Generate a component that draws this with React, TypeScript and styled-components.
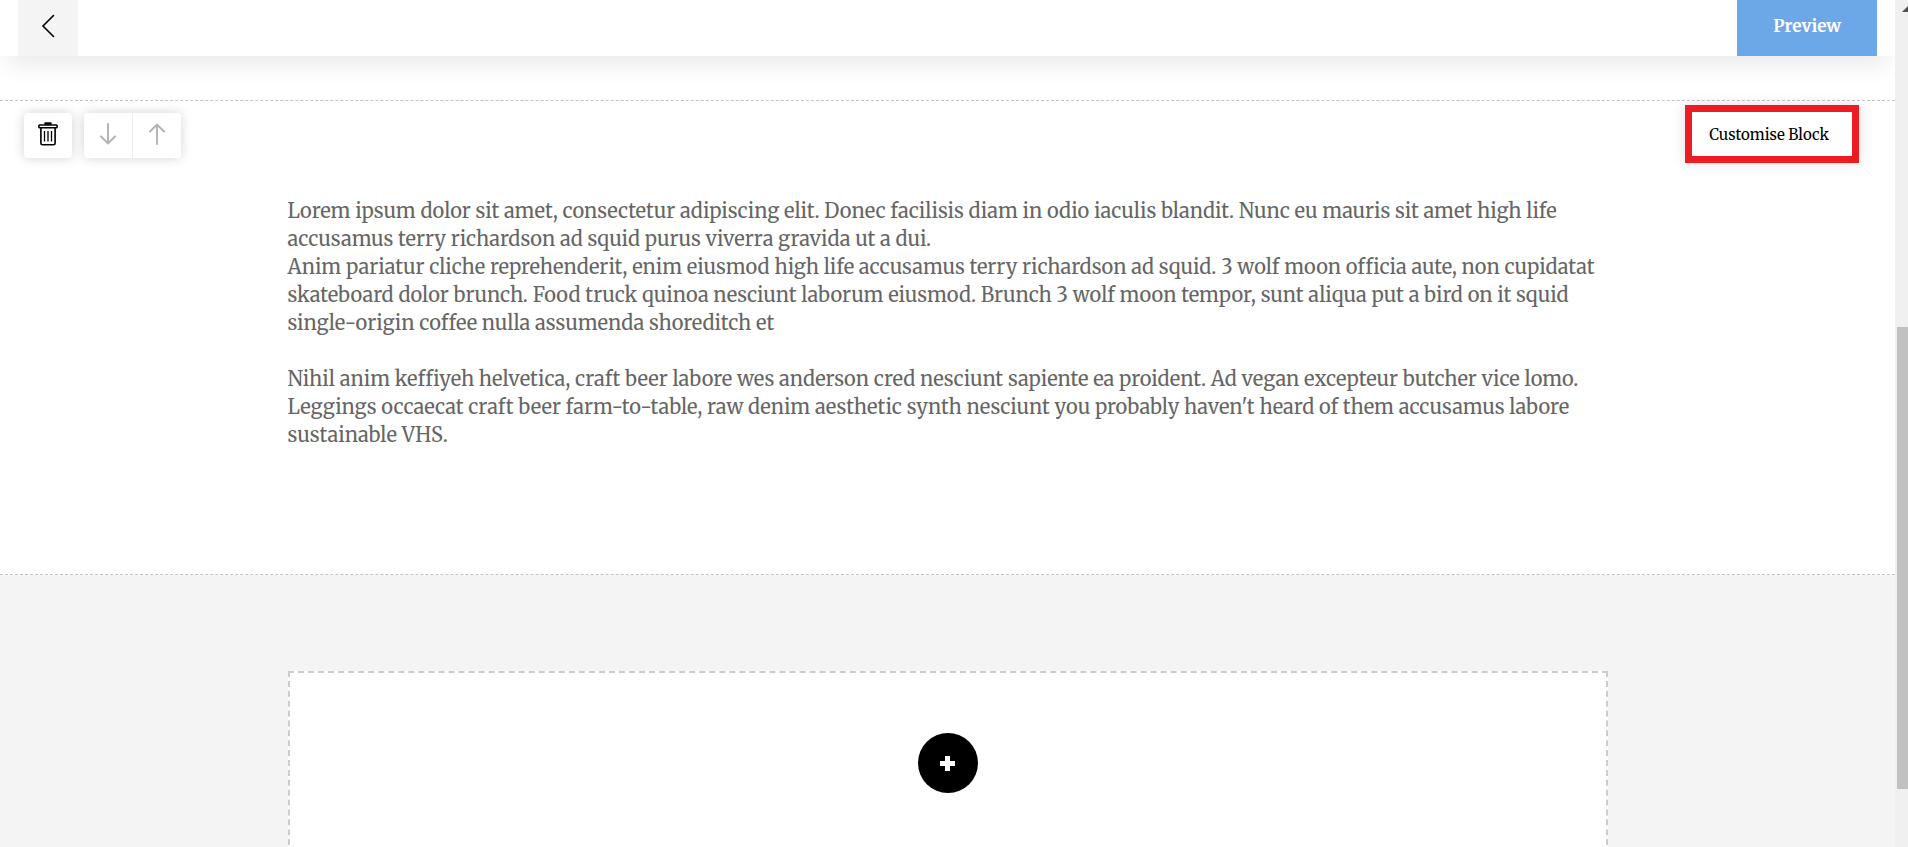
import React from "react";
import styled, { createGlobalStyle } from "styled-components";

const GlobalStyle = createGlobalStyle`
  *, *::before, *::after { box-sizing: border-box; }
  body {
    margin: 0;
    background: #fff;
    font-family: Merriweather, "DejaVu Serif", serif;
  }
  button { font-family: inherit; cursor: pointer; }
`;

const Screen = styled.div`
  display: flex;
  height: 100vh;
  overflow: hidden;
`;

const Page = styled.div`
  flex: 1;
  min-width: 0;
  display: flex;
  flex-direction: column;
  overflow: hidden;
`;

const Header = styled.header`
  flex: none;
  display: flex;
  justify-content: space-between;
  height: 56px;
  padding: 0 18px;
  background: #fff;
  box-shadow: 0 16px 24px -8px rgba(0, 0, 0, 0.09);
`;

const BackButton = styled.button`
  display: flex;
  align-items: center;
  justify-content: center;
  width: 60px;
  padding: 0 0 4px;
  border: 0;
  background: #f4f4f4;
`;

const PreviewButton = styled.button`
  padding: 0 36px 4px;
  border: 0;
  background: #6ca8e8;
  color: #fff;
  font-size: 17px;
  font-weight: 700;
`;

const Block = styled.section`
  flex: none;
  margin-top: 44px;
  padding-bottom: 125px;
  border-top: 1px dashed #c4c4c4;
  border-bottom: 1px dashed #c4c4c4;
`;

const BlockToolbar = styled.div`
  display: flex;
  align-items: flex-start;
  justify-content: space-between;
  padding: 4px 36px 0 24px;
`;

const Tools = styled.div`
  display: flex;
  gap: 12px;
  padding-top: 8px;
`;

const ToolGroup = styled.div`
  display: flex;
  border-radius: 4px;
  background: #fff;
  box-shadow: 0 0 12px rgba(0, 0, 0, 0.18);
`;

const ToolButton = styled.button<{ $muted?: boolean }>`
  display: flex;
  align-items: center;
  justify-content: center;
  width: 48px;
  height: 45px;
  padding: 0 0 4px;
  border: 0;
  background: none;
  color: ${(p) => (p.$muted ? "#b2b2b2" : "#000")};

  & + & {
    width: 49px;
    border-left: 1px solid #eee;
  }
`;

const CustomiseButton = styled.button`
  height: 58px;
  padding: 0 23px 0 17px;
  border: 7px solid #ed1c24;
  background: #fff;
  box-shadow: 0 0 12px rgba(0, 0, 0, 0.14);
  color: #000;
  font-size: 15px;
`;

const Copy = styled.div`
  max-width: 1320px;
  margin: 0 auto;
  padding-top: 34px;
  color: #666;
  font-size: 20px;
  line-height: 28px;
`;

const Paragraph = styled.p`
  margin: 0;

  & + & { margin-top: 28px; }
`;

const AddArea = styled.section`
  flex: 1 0 auto;
  padding: 96px 0;
  background: #f4f4f4;
`;

const DropZone = styled.div`
  display: flex;
  align-items: center;
  justify-content: center;
  max-width: 1320px;
  height: 184px;
  margin: 0 auto;
  border: 2px dashed #ccc;
  background: #fff;
`;

const AddButton = styled.button`
  display: flex;
  align-items: center;
  justify-content: center;
  width: 60px;
  height: 60px;
  padding: 0;
  border: 0;
  border-radius: 50%;
  background: #000;
`;

const ScrollTrack = styled.div`
  flex: none;
  display: flex;
  flex-direction: column;
  align-items: flex-end;
  width: 13px;
  padding-top: 5px;
  background: #f0f0f0;
`;

const ScrollThumb = styled.div`
  width: 11px;
  height: 462px;
  margin-top: 315px;
  background: #c1c1c1;
`;

const ScrollArrow = styled.svg`
  display: block;
`;

const BackIcon = () => (
  <svg width="14" height="24" viewBox="0 0 14 24" fill="none" stroke="#000" strokeWidth="1.6" aria-hidden="true">
    <path d="M12.5 1.5 2 12l10.500 10.500" strokeLinecap="round" />
  </svg>
);

const TrashIcon = () => (
  <svg width="20" height="24" viewBox="0 0 20 24" fill="none" stroke="currentColor" strokeWidth="1.600" aria-hidden="true">
    <path d="M7.500 1.500h5" strokeWidth="2.400" strokeLinecap="round" />
    <rect x="0.900" y="3" width="18.200" height="2.800" rx="0.800" />
    <path d="M2.900 6v15.200a1.500 1.500 0 0 0 1.500 1.500h11.200a1.500 1.500 0 0 0 1.500-1.500V6" />
    <path d="M6.500 9v10.500M10 9v10.500M13.500 9v10.500" strokeWidth="1.300" />
  </svg>
);

const ArrowIcon = ({ up }: { up?: boolean }) => (
  <svg width="16" height="22" viewBox="0 0 16 22" fill="none" stroke="currentColor" strokeWidth="1.900" strokeLinecap="round" aria-hidden="true">
    {up ? <path d="M8 21V1.500M1 8.500l7-7 7 7" /> : <path d="M8 1v19.500M1 13.500l7 7 7-7" />}
  </svg>
);

export default function App() {
  return (
    <>
      <GlobalStyle />
      <Screen>
        <Page>
          <Header>
            <BackButton aria-label="Back">
              <BackIcon />
            </BackButton>
            <PreviewButton>Preview</PreviewButton>
          </Header>
          <Block>
            <BlockToolbar>
              <Tools>
                <ToolGroup>
                  <ToolButton aria-label="Delete block">
                    <TrashIcon />
                  </ToolButton>
                </ToolGroup>
                <ToolGroup>
                  <ToolButton $muted aria-label="Move block down">
                    <ArrowIcon />
                  </ToolButton>
                  <ToolButton $muted aria-label="Move block up">
                    <ArrowIcon up />
                  </ToolButton>
                </ToolGroup>
              </Tools>
              <CustomiseButton>Customise Block</CustomiseButton>
            </BlockToolbar>
            <Copy>
              <Paragraph>
                Lorem ipsum dolor sit amet, consectetur adipiscing elit. Donec facilisis diam in odio iaculis blandit. Nunc eu mauris sit amet high life
                <br />
                accusamus terry richardson ad squid purus viverra gravida ut a dui.
                <br />
                Anim pariatur cliche reprehenderit, enim eiusmod high life accusamus terry richardson ad squid. 3 wolf moon officia aute, non cupidatat
                <br />
                skateboard dolor brunch. Food truck quinoa nesciunt laborum eiusmod. Brunch 3 wolf moon tempor, sunt aliqua put a bird on it squid
                <br />
                single-origin coffee nulla assumenda shoreditch et
              </Paragraph>
              <Paragraph>
                Nihil anim keffiyeh helvetica, craft beer labore wes anderson cred nesciunt sapiente ea proident. Ad vegan excepteur butcher vice lomo.
                <br />
                Leggings occaecat craft beer farm-to-table, raw denim aesthetic synth nesciunt you probably haven't heard of them accusamus labore
                <br />
                sustainable VHS.
              </Paragraph>
            </Copy>
          </Block>
          <AddArea>
            <DropZone>
              <AddButton aria-label="Add block">
                <svg width="15" height="15" viewBox="0 0 15 15" fill="#fff" aria-hidden="true">
                  <path d="M5 0h5v5h5v5h-5v5H5v-5H0V5h5z" />
                </svg>
              </AddButton>
            </DropZone>
          </AddArea>
        </Page>
        <ScrollTrack aria-hidden="true">
          <ScrollArrow width="6" height="7" viewBox="0 0 6 7" fill="#505050">
            <path d="M0 7 6 1v6z" />
          </ScrollArrow>
          <ScrollThumb />
        </ScrollTrack>
      </Screen>
    </>
  );
}
